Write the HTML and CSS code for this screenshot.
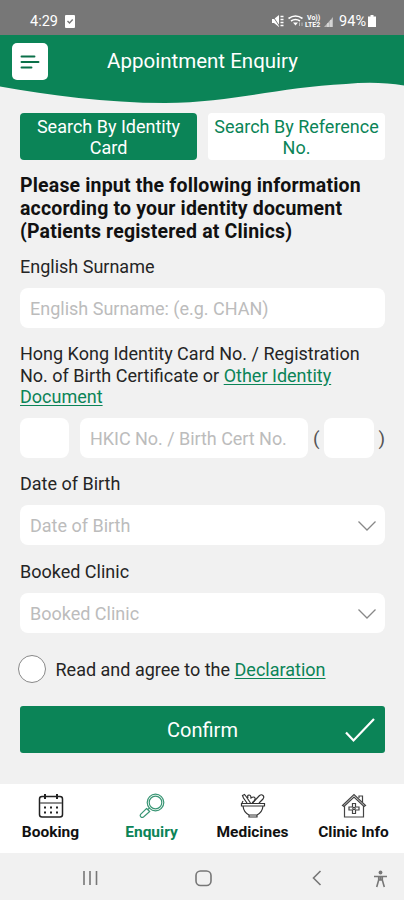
FILE: index.html
```
<!DOCTYPE html>
<html lang="en">
<head>
  <meta charset="UTF-8" />
  <meta name="viewport" content="width=device-width, initial-scale=1.0" />
  <title>Appointment Enquiry</title>
  <link rel="stylesheet" href="styles.css">
</head>
<body>

  <!-- Status bar -->
  <div class="status-bar">
    <span class="time">4:29</span>
    <svg class="status-check" width="10" height="13" viewBox="0 0 10 13">
      <rect width="10" height="13" rx="1" fill="#fff" />
      <path d="M2.500 6l2 2L7.700 4.500" fill="none" stroke="#777" stroke-width="1.400" />
    </svg>
    <div class="status-right">
      <svg width="64" height="14" viewBox="0 0 64 14" fill="none" stroke="#fff">
        <path d="M1 5h2l5-4v12L3 9H1z" fill="#fff" stroke="none" />
        <path d="M1 1l8 12" stroke="#777" />
        <path d="M9.500 2.500h3M9.500 5.500h3M9.500 8.500h3M9.500 11.500h3" stroke-width="1.300" />
        <path d="M17.500 4.500q7-5 14 0M20 7q4.500-3 9 0" stroke-width="1.600" />
        <path d="M22 8.500h5l-2.500 3z" fill="#fff" stroke="none" />
        <path d="M28.500 12V8.500M31 12V8.500" stroke="#bbb" />
        <path d="M53 13l9-10v10z" fill="#bbb" stroke="none" />
        <path d="M57 13V9M60 13V6" stroke="#eee" />
        <text x="36" y="6" class="volte">Vo))</text>
        <text x="34" y="13" class="volte">LTE2</text>
      </svg>
      <span class="battery-text">94%</span>
      <svg width="8" height="12" viewBox="0 0 8 12" fill="#fff">
        <path d="M2.500 0h3v1.500H8V12H0V1.500h2.500z" />
      </svg>
    </div>
  </div>

  <!-- Header -->
  <header class="header">
    <svg class="wave" width="404" height="70" viewBox="0 0 404 70">
      <path d="M0 0H404V50.500C386 47.500 366 47 346 49C280 52 235 67 165 68C105 68 50 60 0 51.500Z" fill="#0b8457" />
    </svg>
    <button class="menu-btn" aria-label="Menu">
      <svg width="20" height="16" viewBox="0 0 20 16" stroke="#0b7049" stroke-width="1.900" stroke-linecap="round">
        <path d="M1.500 2.500h13M1.500 8h17M1.500 13.500h10" />
      </svg>
    </button>
    <h1>Appointment Enquiry</h1>
  </header>

  <main class="content">
    <div class="tabs">
      <button class="tab active">Search By Identity<br>Card</button>
      <button class="tab">Search By Reference<br>No.</button>
    </div>

    <h2>Please input the following information<br>according to your identity document<br>(Patients registered at Clinics)</h2>

    <label class="label surname-label" for="surname">English Surname</label>
    <input class="field" type="text" id="surname" placeholder="English Surname: (e.g. CHAN)" />

    <div class="label id-label">Hong Kong Identity Card No. / Registration<br>No. of Birth Certificate or <a href="#">Other Identity<br>Document</a></div>
    <div class="id-row">
      <input class="field prefix" type="text" aria-label="Prefix" />
      <input class="field number" type="text" placeholder="HKIC No. / Birth Cert No." aria-label="Number" />
      <span class="paren">(</span>
      <input class="field digit" type="text" aria-label="Check digit" />
      <span class="paren">)</span>
    </div>

    <div class="label dob-label">Date of Birth</div>
    <div class="field select">
      <span>Date of Birth</span>
      <svg width="20" height="12" viewBox="0 0 20 12"><path d="M1.500 1.500L10 10l8.500-8.500" /></svg>
    </div>

    <div class="label clinic-label">Booked Clinic</div>
    <div class="field select">
      <span>Booked Clinic</span>
      <svg width="20" height="12" viewBox="0 0 20 12"><path d="M1.500 1.500L10 10l8.500-8.500" /></svg>
    </div>

    <div class="agree">
      <span class="radio"></span>
      <span class="agree-text">Read and agree to the <a href="#">Declaration</a></span>
    </div>

    <button class="confirm">
      <span>Confirm</span>
      <svg width="32" height="26" viewBox="0 0 32 26"><path d="M2 15.500l7.500 8L30 2" /></svg>
    </button>
  </main>

  <!-- Bottom navigation -->
  <nav class="bottom-nav">
    <a class="nav-item" href="#">
      <svg width="26" height="26" viewBox="0 0 26 26" fill="none" stroke="#222" stroke-width="1.500">
        <rect x="1.500" y="3.500" width="23" height="20.500" rx="2.500" />
        <path d="M2 10h22" stroke="#666" />
        <path d="M7 1v5M19 1v5" stroke-width="2" />
        <path d="M6 14.500h14M6 19.500h14" stroke-width="2" stroke-dasharray="2 4" />
      </svg>
      <span>Booking</span>
    </a>
    <a class="nav-item active" href="#">
      <svg width="26" height="26" viewBox="0 0 26 26" fill="none" stroke="#3a9675" stroke-width="1.200">
        <circle cx="16.500" cy="9.500" r="8.300" />
        <circle cx="16.500" cy="9.500" r="6.300" />
        <path d="M10.500 15l-1.500 1.500M7.500 15.500l3.200 3L4.500 24q-1.500 1-2.700-.2t0-2.600z" />
      </svg>
      <span>Enquiry</span>
    </a>
    <a class="nav-item" href="#">
      <svg width="26" height="26" viewBox="0 0 26 26" fill="none" stroke="#333" stroke-width="1.200">
        <path d="M1.500 10.500h23v2.500h-23zM3 13c.5 5 3 7.500 6 9h8c3-1.500 5.500-4 6-9M9 22v2h8v-2" />
        <path d="M12.500 10l7-7.500q2-1.500 3.500 0t0 3.500L19 10" />
        <path d="M7 10L3.500 5l-1-2.500 2-1 2 2.500 4 6M8 5q-1-3 1-3t2 3q3-2 4 0t-3 5M3 8l-1 2" />
      </svg>
      <span>Medicines</span>
    </a>
    <a class="nav-item" href="#">
      <svg width="26" height="26" viewBox="0 0 26 26" fill="none" stroke="#444" stroke-width="1.200">
        <path d="M1.500 12.500L13 1.500l11.500 11-1.500 1-10-9.500L3 13.500z" />
        <path d="M3.500 13v11h19V13M18 5V3h3.500v6" />
        <path d="M11.500 10.500h3v3.500h3.500v3h-3.500v3.500h-3v-3.500H8v-3h3.500z" />
        <circle cx="13" cy="15.500" r="1.200" />
      </svg>
      <span>Clinic Info</span>
    </a>
  </nav>

  <!-- System buttons -->
  <footer class="system-bar">
    <svg width="404" height="47" viewBox="0 0 404 47" fill="none" stroke="#777" stroke-width="1.600">
      <path d="M84 18v14M90 18v14M96.500 18v14" />
      <rect x="196" y="18" width="15" height="14.500" rx="4.500" />
      <path d="M320.500 18l-7 7 7 7" />
      <circle cx="380.500" cy="19.500" r="1.900" fill="#777" stroke="none" />
      <path d="M374 23.500h13M380.500 23v4M378.700 23.500v3.500l-2 7M382.300 23.500v3.500l2 7M378.700 27h3.600" />
    </svg>
  </footer>

</body>
</html>
```
FILE: styles.css
```
:root {
  --primary: #0b8457;
  --page-bg: #f1f1f1;
  --text: #252525;
  --placeholder: #bcbcbc;
}

* {
  margin: 0;
  padding: 0;
  box-sizing: border-box;
}

body {
  width: 404px;
  height: 900px;
  display: flex;
  flex-direction: column;
  background: var(--page-bg);
  color: var(--text);
  font-family: Roboto, sans-serif;
  overflow: hidden;
}

button {
  border: none;
  font-family: inherit;
  cursor: pointer;
}

a {
  color: var(--primary);
  text-underline-offset: 2px;
}

/* status bar */
.status-bar {
  height: 35px;
  padding: 7px 28px 0 30px;
  display: flex;
  align-items: center;
  background: #777;
  color: #fff;
}

.time {
  font-size: 14.5px;
}

.status-check {
  margin-left: 7px;
}

.status-right {
  margin-left: auto;
  display: flex;
  align-items: center;
}

.volte {
  font-size: 7px;
  font-weight: bold;
  fill: #fff;
  stroke: none;
}

.battery-text {
  margin: 0 2px 0 4px;
  font-size: 14.5px;
}

/* header */
.header {
  position: relative;
  height: 78px;
}

.wave {
  position: absolute;
  top: 0;
  left: 0;
}

.menu-btn {
  position: absolute;
  top: 8px;
  left: 12px;
  width: 36px;
  height: 37px;
  display: flex;
  align-items: center;
  padding-left: 8px;
  border-radius: 5px;
  background: #fff;
}

.header h1 {
  position: relative;
  padding: 13px 0 0 1px;
  text-align: center;
  color: #fff;
  font-size: 20.5px;
  line-height: 26px;
  font-weight: normal;
}

/* form */
.content {
  height: 671px;
  padding: 0 19px 0 20px;
}

.tabs {
  display: flex;
  gap: 11px;
}

.tab {
  flex: 1;
  height: 47px;
  padding-top: 1px;
  border-radius: 4px;
  background: #fff;
  color: var(--primary);
  font-size: 18px;
  line-height: 21px;
  white-space: nowrap;
}

.tab.active {
  background: var(--primary);
  color: #fff;
}

.content h2 {
  margin-top: 14px;
  color: #111;
  font-size: 19.5px;
  line-height: 23px;
  letter-spacing: 0.17px;
  font-weight: bold;
  white-space: nowrap;
}

.label {
  display: block;
  font-size: 18px;
  line-height: 21.5px;
  white-space: nowrap;
}

.surname-label {
  margin: 13px 0 10px;
}

.field {
  display: block;
  width: 100%;
  height: 40px;
  padding: 1px 10px 0;
  border: none;
  border-radius: 8px;
  outline: none;
  background: #fff;
  font-family: inherit;
  font-size: 18px;
}

.field::placeholder {
  color: var(--placeholder);
}

.id-label {
  margin: 15.5px 0 10.5px;
}

.id-row {
  display: flex;
  align-items: center;
}

.prefix {
  width: 49px;
  margin-right: 11px;
}

.number {
  width: 228px;
}

.number::placeholder {
  letter-spacing: -0.04px;
}

.digit {
  width: 50px;
}

.paren {
  width: 17px;
  text-align: center;
  color: #555;
  font-size: 19px;
}

.id-row .paren:last-child {
  width: 10px;
  margin-left: 1px;
  text-align: right;
}

.dob-label {
  margin: 15px 0 10px;
}

.select {
  display: flex;
  align-items: center;
  justify-content: space-between;
  padding: 2px 8px 0 10px;
  color: var(--placeholder);
}

.select path {
  fill: none;
  stroke: #888;
  stroke-width: 1.3;
}

.clinic-label {
  margin: 16.5px 0 10px;
}

.agree {
  display: flex;
  align-items: center;
  margin: 22px 0 0 -2px;
}

.radio {
  width: 28px;
  height: 28px;
  border: 1px solid #888;
  border-radius: 50%;
  background: #fff;
}

.agree-text {
  margin-left: 9.5px;
  padding-top: 2px;
  font-size: 18px;
}

.confirm {
  width: 100%;
  height: 47px;
  margin-top: 23px;
  padding: 1px 9px 0 41px;
  display: flex;
  align-items: center;
  border-radius: 3px;
  background: var(--primary);
  color: #fff;
  font-size: 20px;
}

.confirm span {
  flex: 1;
}

.confirm path {
  fill: none;
  stroke: #fff;
  stroke-width: 2.2;
}

/* bottom navigation */
.bottom-nav {
  height: 69px;
  padding-top: 9px;
  display: grid;
  grid-template-columns: repeat(4, 1fr);
  background: #fff;
}

.nav-item {
  display: flex;
  flex-direction: column;
  align-items: center;
  gap: 4px;
  color: #111;
  font-size: 15.5px;
  line-height: 19px;
  font-weight: bold;
  text-decoration: none;
  white-space: nowrap;
}

.nav-item.active {
  color: var(--primary);
}

.system-bar {
  height: 47px;
}
```
